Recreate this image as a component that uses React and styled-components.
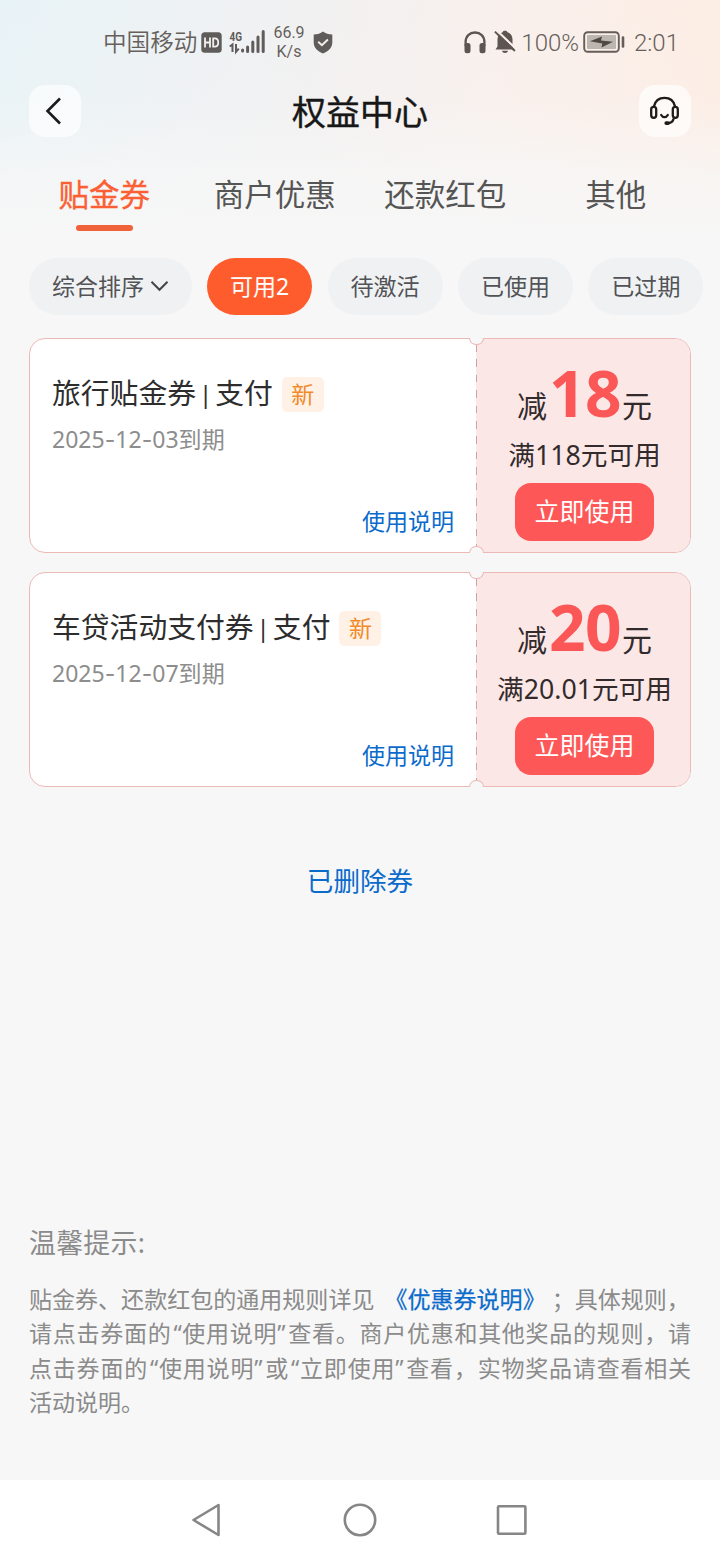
import React from 'react';
import styled, { createGlobalStyle } from 'styled-components';

const GlobalStyle = createGlobalStyle`
  * { box-sizing: border-box; }
  body {
    margin: 0;
    background: #f7f7f7;
    font-family: 'Noto Sans', 'Noto Sans CJK SC', sans-serif;
  }
  button { font: inherit; border: 0; padding: 0; margin: 0; }
  svg { display: block; flex: none; }
`;

const Screen = styled.div`
  width: 720px;
  height: 1560px;
  display: flex;
  flex-direction: column;
  overflow: hidden;
  background:
    linear-gradient(to bottom, rgba(247, 247, 247, 0) 0, rgba(247, 247, 247, 0.12) 100px, rgba(247, 247, 247, 0.75) 175px, #f7f7f7 240px),
    linear-gradient(100deg, #e8f3f7 0, #f0f1f2 28%, #f9f0ec 52%, #feece1 80%, #feece0 100%);
`;

const StatusBar = styled.header`
  height: 84px;
  display: flex;
  align-items: center;
  padding: 0 41px 0 103px;
  color: #665f5c;
  font-family: Roboto, 'Noto Sans CJK SC', sans-serif;
  font-weight: 350;
  font-size: 24px;
  line-height: 30px;
`;

const Carrier = styled.span`
  font-size: 23.6px;
  width: 98px;
  padding-top: 2px;
  white-space: nowrap;
`;

const Speed = styled.span`
  width: 32px;
  margin: 0 8px 0 7px;
  font-size: 16px;
  line-height: 19px;
  text-align: center;
  font-weight: 400;
`;

const StatusRight = styled.div`
  display: flex;
  align-items: center;
  margin-left: auto;
`;

const StatusText = styled.span`
  white-space: nowrap;
  padding-top: 1px;
  margin-left: ${(p) => p.$gap}px;
`;

const TitleBar = styled.div`
  height: 54px;
  padding: 0 29px;
  display: flex;
  align-items: center;
  justify-content: space-between;
`;

const RoundButton = styled.button`
  width: 52px;
  height: 52px;
  border-radius: 16px;
  background: rgba(255, 255, 255, 0.65);
  display: flex;
  align-items: center;
  justify-content: center;
`;

const Title = styled.h1`
  margin: 0;
  padding-top: 1px;
  font-size: 34px;
  line-height: 50px;
  font-weight: 400;
  -webkit-text-stroke: 0.4px;
  color: #171717;
`;

const Tabs = styled.nav`
  display: flex;
  height: 94px;
  padding: 33px 19px 0;
`;

const Tab = styled.div`
  flex: 1;
  display: flex;
  flex-direction: column;
  align-items: center;
  font-size: 30.5px;
  line-height: 46px;
  color: ${(p) => (p.$active ? '#fb5f35' : '#555')};
  -webkit-text-stroke: ${(p) => (p.$active ? '0.35px' : '0')};

  &::after {
    content: '';
    width: 57px;
    height: 6px;
    margin-top: 8px;
    border-radius: 3px;
    background: ${(p) => (p.$active ? '#f0623a' : 'transparent')};
  }
`;

const Filters = styled.div`
  display: flex;
  gap: 15.3px;
  margin: 26px 0 23px;
  padding-left: 29px;
`;

const Chip = styled.button`
  height: 57px;
  padding: 0 23px 2px;
  border-radius: 29px;
  flex: none;
  display: flex;
  align-items: center;
  gap: 5.6px;
  font-size: 23.04px;
  line-height: 34px;
  white-space: nowrap;
  color: ${(p) => (p.$active ? '#fff' : '#515356')};
  background: ${(p) => (p.$active ? '#ff5c2d' : '#f0f1f3')};
`;

const Coupons = styled.main`
  display: flex;
  flex-direction: column;
  gap: 19px;
  padding: 0 29px;
`;

const Card = styled.article`
  position: relative;
  display: flex;
  height: 215px;
  border: 1px solid #ecb9b7;
  border-radius: 16px;
  background: #fff;
`;

const Notch = styled.i`
  position: absolute;
  left: 439px;
  width: 15px;
  height: 7px;
  background: #f7f7f7;
  border: 1px solid #ecb9b7;
  ${(p) =>
    p.$bottom
      ? 'bottom: -1px; border-bottom: 0; border-radius: 8px 8px 0 0;'
      : 'top: -1px; border-top: 0; border-radius: 0 0 8px 8px;'}
`;

const Info = styled.div`
  flex: 1;
  display: flex;
  flex-direction: column;
  padding: 32px 22px 14px 22px;
`;

const NameRow = styled.div`
  display: flex;
  align-items: center;
  gap: 9px;
`;

const Name = styled.h2`
  margin: 0;
  height: 44px;
  font-size: 28.8px;
  line-height: 44px;
  font-weight: 400;
  color: #2d2d2d;
  white-space: pre;
`;

const Separator = styled.span`
  font-size: 24px;
  line-height: 1;
  margin: 0 3px;
  vertical-align: 1px;
`;

const NewTag = styled.span`
  width: 42px;
  height: 35px;
  margin-top: 3px;
  border-radius: 5px;
  background: #fff1e6;
  color: #f08a2a;
  font-size: 23px;
  line-height: 34px;
  text-align: center;
`;

const Expiry = styled.div`
  margin-top: 7px;
  font-size: 23.04px;
  line-height: 34px;
  color: #8d8d8d;
`;

const Dash = styled.span`
  font-family: Inter, sans-serif;
`;

const UsageLink = styled.a`
  margin-top: auto;
  align-self: flex-end;
  font-size: 23.04px;
  line-height: 34px;
  color: #0b6bcb;
`;

const Offer = styled.div`
  width: 214px;
  display: flex;
  flex-direction: column;
  align-items: center;
  padding: 15px 0 0 3px;
  border-radius: 0 15px 15px 0;
  color: #332b2b;
  background:
    repeating-linear-gradient(to bottom, #d3a2a6 0 7.7px, transparent 7.7px 15.4px) 0 5px / 1px 203px no-repeat,
    #fce7e7;
`;

const Amount = styled.div`
  display: flex;
  align-items: baseline;
  height: 78px;
  margin-bottom: 4px;
  font-size: 30px;
  line-height: 78px;
`;

const Value = styled.strong`
  font-size: 64px;
  font-weight: 700;
  letter-spacing: -0.7px;
  color: #fc5757;
  margin: 0 1px 0 2px;
`;

const Condition = styled.div`
  font-size: 26.7px;
  line-height: 38px;
  white-space: nowrap;
`;

const UseButton = styled.button`
  width: 139px;
  height: 58px;
  margin-top: 9px;
  border-radius: 16px;
  background: #fe5757;
  color: #fff;
  font-size: 24.96px;
  line-height: 54px;
  padding-bottom: 3px;
`;

const DeletedLink = styled.a`
  align-self: center;
  margin-top: 75px;
  font-size: 26.6px;
  line-height: 38px;
  color: #0b6bcb;
`;

const Tips = styled.section`
  margin-top: auto;
  padding: 0 29px 61px;
  color: #8b8b8b;
`;

const TipsTitle = styled.h3`
  margin: 0 0 18px;
  font-size: 26.88px;
  letter-spacing: 0.3px;
  line-height: 40px;
  font-weight: 400;
`;

const TipLine = styled.div`
  height: 34.56px;
  font-size: 23.04px;
  line-height: 34.56px;
  white-space: nowrap;
  text-align-last: ${(p) => (p.$fill ? 'justify' : 'left')};
  font-family: 'Noto Sans CJK SC', sans-serif;
  text-spacing-trim: space-all;
`;

const Quote = styled.span`
  font-family: 'Noto Sans', sans-serif;
  padding: ${(p) => (p.$close ? '0 2px 0 0' : '0 0 0 2px')};
`;

const RulesLink = styled.a`
  color: #0b6bcb;
  -webkit-text-stroke: 0.25px;
  margin: 0 6px 0 10px;
`;

const SystemNav = styled.footer`
  height: 80px;
  flex: none;
  display: flex;
  align-items: center;
  justify-content: center;
  gap: 118px;
  background: #fff;
`;

const HdIcon = () => (
  <svg width="21" height="21" viewBox="0 0 21 21">
    <rect x="0.3" y="0.3" width="20.4" height="20.4" rx="3.5" fill="#5f5c5b" />
    <path d="M4 5.5v10M9 5.5v10M4 10.5h5M12.2 6.3v8.4h1.6c2.3 0 3.4-1.4 3.4-4.2s-1.1-4.2-3.4-4.2z" fill="none" stroke="#f3f2f1" strokeWidth="1.8" />
  </svg>
);

const SignalLabel = styled.text`
  font: 700 13.5px 'Roboto', sans-serif;
  fill: #5f5c5b;
`;

const SignalSvg = styled.svg`
  margin-left: 7px;
`;

const SignalIcon = () => (
  <SignalSvg width="37" height="26" viewBox="0 0 37 26">
    <SignalLabel x="0.5" y="11.5" textLength="12.5" lengthAdjust="spacingAndGlyphs">4G</SignalLabel>
    <path d="M0.800 17.500l2.700-2V23M7 15v7.800l2.800-3.200" fill="none" stroke="#5f5c5b" strokeWidth="2" />
    <path d="M13.6 21v1M18.600 18v4.500M23.800 13v9.500M29 8v14.500M34.200 2.500v20" stroke="#5f5c5b" strokeWidth="3" strokeLinecap="round" />
  </SignalSvg>
);

const ShieldIcon = () => (
  <svg width="20" height="23" viewBox="0 0 20 23">
    <path d="M10 0.5c2.5 1.9 5.500 2.900 9.300 3v8c0 5-3.500 8.800-9.300 11C4.200 20.300.7 16.500.7 11.500v-8C4.500 3.400 7.500 2.400 10 .5z" fill="#5f5c5b" />
    <path d="M5.200 10.800l3.700 3.500 6-5.800" fill="none" stroke="#f6efec" strokeWidth="1.900" />
  </svg>
);

const HeadphoneIcon = () => (
  <svg width="22" height="23" viewBox="0 0 22 23">
    <path d="M1.600 15v-4C1.600 5.200 5.600 1.500 11 1.500s9.400 3.700 9.400 9.500v4" fill="none" stroke="#5d5552" strokeWidth="2.300" />
    <rect x="0.500" y="12" width="6" height="10.300" rx="2.500" fill="#5d5552" />
    <rect x="15.500" y="12" width="6" height="10.300" rx="2.500" fill="#5d5552" />
  </svg>
);

const BellSvg = styled.svg`
  margin-left: 8px;
`;

const MutedBellIcon = () => (
  <BellSvg width="22" height="24" viewBox="0 0 22 24">
    <path d="M1.500 19.500l2-3V9.500C3.500 5.500 5.500 3 8.600 2.200 9.300.4 12.700.4 13.400 2.200 16.500 3 18.500 5.500 18.500 9.500v7l2 3zM8 20.800h6c-.5 3-5.500 3-6 0z" fill="#5d5552" />
    <path d="M3 0.800L22 18.800" stroke="#fcefe8" strokeWidth="2.200" />
    <path d="M0.900 1.600L20.900 21" stroke="#5d5552" strokeWidth="2" />
  </BellSvg>
);

const BatterySvg = styled.svg`
  margin-left: 4px;
`;

const BatteryIcon = () => (
  <BatterySvg width="42" height="22" viewBox="0 0 42 22">
    <rect x="1.200" y="1.200" width="34.600" height="19.600" rx="3.500" fill="none" stroke="#665c58" strokeWidth="1.900" />
    <rect x="4" y="4" width="29" height="14" rx="1" fill="#bdb5b0" />
    <path d="M7 10.200L19 5.500l-1 4 12 1.200L18.500 16.500l.8-4z" fill="#4f4744" />
    <path d="M40 6.500v9" stroke="#665c58" strokeWidth="2.600" strokeLinecap="round" />
  </BatterySvg>
);

const BackIcon = () => (
  <svg width="20" height="30" viewBox="0 0 20 30">
    <path d="M15 2.500L2.500 15 15 27.500" fill="none" stroke="#1b1b1b" strokeWidth="2.600" />
  </svg>
);

const ServiceIcon = () => (
  <svg width="30" height="30" viewBox="0 0 30 30">
    <g fill="none" stroke="#201b19" strokeWidth="2.300" strokeLinecap="round">
      <rect x="1.200" y="10.800" width="5" height="11" rx="2.500" />
      <rect x="22.800" y="10.800" width="5" height="11" rx="2.500" />
      <path d="M4 10.300C5.200 5 9 1.900 14.500 1.900S23.800 5 25 10.300" />
      <path d="M11.200 19c1.600 2.900 5 2.900 6.600 0" />
      <path d="M23.500 23.200c-.8 2.600-2.800 4-6 4.200" />
      <path d="M16.300 27.200l1.600-.1" strokeWidth="3.800" />
    </g>
  </svg>
);

const ChevronIcon = () => (
  <svg width="19" height="12" viewBox="0 0 19 12">
    <path d="M1.500 1.800l8 8 8-8" fill="none" stroke="#444" strokeWidth="2" />
  </svg>
);

const NavIcon = ({ children }) => (
  <svg width="34" height="36" viewBox="0 0 34 36" fill="none" stroke="#868686" strokeWidth="2.600" strokeLinejoin="round">
    {children}
  </svg>
);

const tabs = ['贴金券', '商户优惠', '还款红包', '其他'];
const filters = ['可用2', '待激活', '已使用', '已过期'];
const coupons = [
  { name: '旅行贴金券', kind: '支付', date: ['2025', '12', '03'], value: '18', condition: '满118元可用' },
  { name: '车贷活动支付券', kind: '支付', date: ['2025', '12', '07'], value: '20', condition: '满20.01元可用' },
];

const Coupon = ({ name, kind, date, value, condition }) => (
  <Card>
    <Info>
      <NameRow>
        <Name>{name}<Separator>|</Separator>{kind}</Name>
        <NewTag>新</NewTag>
      </NameRow>
      <Expiry>
        {date[0]}<Dash>-</Dash>{date[1]}<Dash>-</Dash>{date[2]}到期
      </Expiry>
      <UsageLink>使用说明</UsageLink>
    </Info>
    <Offer>
      <Amount>减<Value>{value}</Value>元</Amount>
      <Condition>{condition}</Condition>
      <UseButton>立即使用</UseButton>
    </Offer>
    <Notch />
    <Notch $bottom />
  </Card>
);

export default function App() {
  return (
    <Screen>
      <GlobalStyle />
      <StatusBar>
        <Carrier>中国移动</Carrier>
        <HdIcon />
        <SignalIcon />
        <Speed>66.9 K/s</Speed>
        <ShieldIcon />
        <StatusRight>
          <HeadphoneIcon />
          <MutedBellIcon />
          <StatusText $gap={5}>100%</StatusText>
          <BatteryIcon />
          <StatusText $gap={9}>2:01</StatusText>
        </StatusRight>
      </StatusBar>
      <TitleBar>
        <RoundButton><BackIcon /></RoundButton>
        <Title>权益中心</Title>
        <RoundButton><ServiceIcon /></RoundButton>
      </TitleBar>
      <Tabs>
        {tabs.map((t, i) => <Tab key={t} $active={i === 0}>{t}</Tab>)}
      </Tabs>
      <Filters>
        <Chip>综合排序<ChevronIcon /></Chip>
        {filters.map((f, i) => <Chip key={f} $active={i === 0}>{f}</Chip>)}
      </Filters>
      <Coupons>
        {coupons.map((c) => <Coupon key={c.name} {...c} />)}
      </Coupons>
      <DeletedLink>已删除券</DeletedLink>
      <Tips>
        <TipsTitle>温馨提示:</TipsTitle>
        <TipLine>贴金券、还款红包的通用规则详见<RulesLink>《优惠券说明》</RulesLink>；具体规则，</TipLine>
        <TipLine $fill>请点击券面的<Quote>“</Quote>使用说明<Quote $close>”</Quote>查看。商户优惠和其他奖品的规则，请</TipLine>
        <TipLine $fill>点击券面的<Quote>“</Quote>使用说明<Quote $close>”</Quote>或<Quote>“</Quote>立即使用<Quote $close>”</Quote>查看，实物奖品请查看相关</TipLine>
        <TipLine>活动说明。</TipLine>
      </Tips>
      <SystemNav>
        <NavIcon><path d="M2.500 18L27.500 3v30z" /></NavIcon>
        <NavIcon><circle cx="17" cy="18" r="15.200" /></NavIcon>
        <NavIcon><rect x="3" y="4.300" width="27.400" height="27.400" rx="1" /></NavIcon>
      </SystemNav>
    </Screen>
  );
}
